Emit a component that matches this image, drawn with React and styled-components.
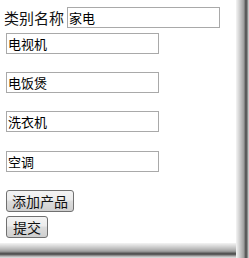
import React from "react";
import styled, { createGlobalStyle } from "styled-components";

const Global = createGlobalStyle`
  html, body { margin: 0; padding: 0; background: #fff; }
  body { font-family: "Noto Sans CJK SC", "Liberation Sans", sans-serif; }
`;

const Screen = styled.div`
  width: 249px;
  height: 258px;
  overflow: hidden;
  background-color: #fff;
  background-image:
    linear-gradient(to right, #f4f4f4 0px, #d6d6d6 3px, #b4b4b4 6px, #9c9c9c 8px, #6a6a6a 9px, #4c4c4c 10px, #6e6e6e 11px, #a8a8a8 12px, #e6e6e6 13px),
    linear-gradient(to bottom, #f4f4f4 0px, #d8d8d8 3px, #bababa 6px, #a2a2a2 8px, #8a8a8a 9px, #5e5e5e 10px, #4a4a4a 11px, #707070 12px, #aaaaaa 13px, #e4e4e4 15px);
  background-size: 13px 100%, 100% 15px;
  background-position: 236px 0, 0 243px;
  background-repeat: no-repeat;
`;

const Page = styled.div`
  width: 236px;
  height: 243px;
  background: #fff;
  box-sizing: border-box;
  padding: 7px 0 0 5px;
  display: flex;
  flex-direction: column;
  align-items: flex-start;
`;

const Row = styled.div`
  display: flex;
  align-items: center;
  gap: 3px;
  margin-top: ${(p) => p.$top || 0}px;
`;

const Label = styled.span`
  font-size: 15px;
  line-height: 21px;
  color: #111;
  margin-left: -1px;
`;

const Field = styled.input`
  box-sizing: border-box;
  width: 153px;
  height: 21px;
  margin: 0 0 0 ${(p) => p.$indent || 0}px;
  margin-top: ${(p) => p.$top || 0}px;
  padding: 0 1px;
  border: 1px solid #a9a9a9;
  border-radius: 0;
  background: #fff;
  font-family: "Noto Sans CJK SC", sans-serif;
  font-size: 13px;
  line-height: 19px;
  color: #000;
  outline: none;
`;

const Button = styled.button`
  box-sizing: border-box;
  height: 22px;
  margin: ${(p) => p.$top || 0}px 0 0 1px;
  padding: 0 ${(p) => p.$pad || 5}px;
  border: 1px solid #707070;
  border-radius: 3px;
  background: linear-gradient(to bottom, #f3f3f3 0%, #ececec 45%, #dddddd 50%, #cfcfcf 100%);
  font-family: "Noto Sans CJK SC", sans-serif;
  font-size: 14px;
  line-height: 20px;
  color: #111;
  cursor: pointer;
`;

const items = ["电视机", "电饭煲", "洗衣机", "空调"];
const tops = [5, 18, 18, 19];

export default function App() {
  return (
    <Screen>
      <Global />
      <Page>
        <Row>
          <Label>类别名称</Label>
          <Field defaultValue="家电" />
        </Row>
        {items.map((name, i) => (
          <Field key={name} defaultValue={name} $indent={1} $top={tops[i]} />
        ))}
        <Button $top={18} $pad={5}>添加产品</Button>
        <Button $top={4} $pad={6}>提交</Button>
      </Page>
    </Screen>
  );
}
